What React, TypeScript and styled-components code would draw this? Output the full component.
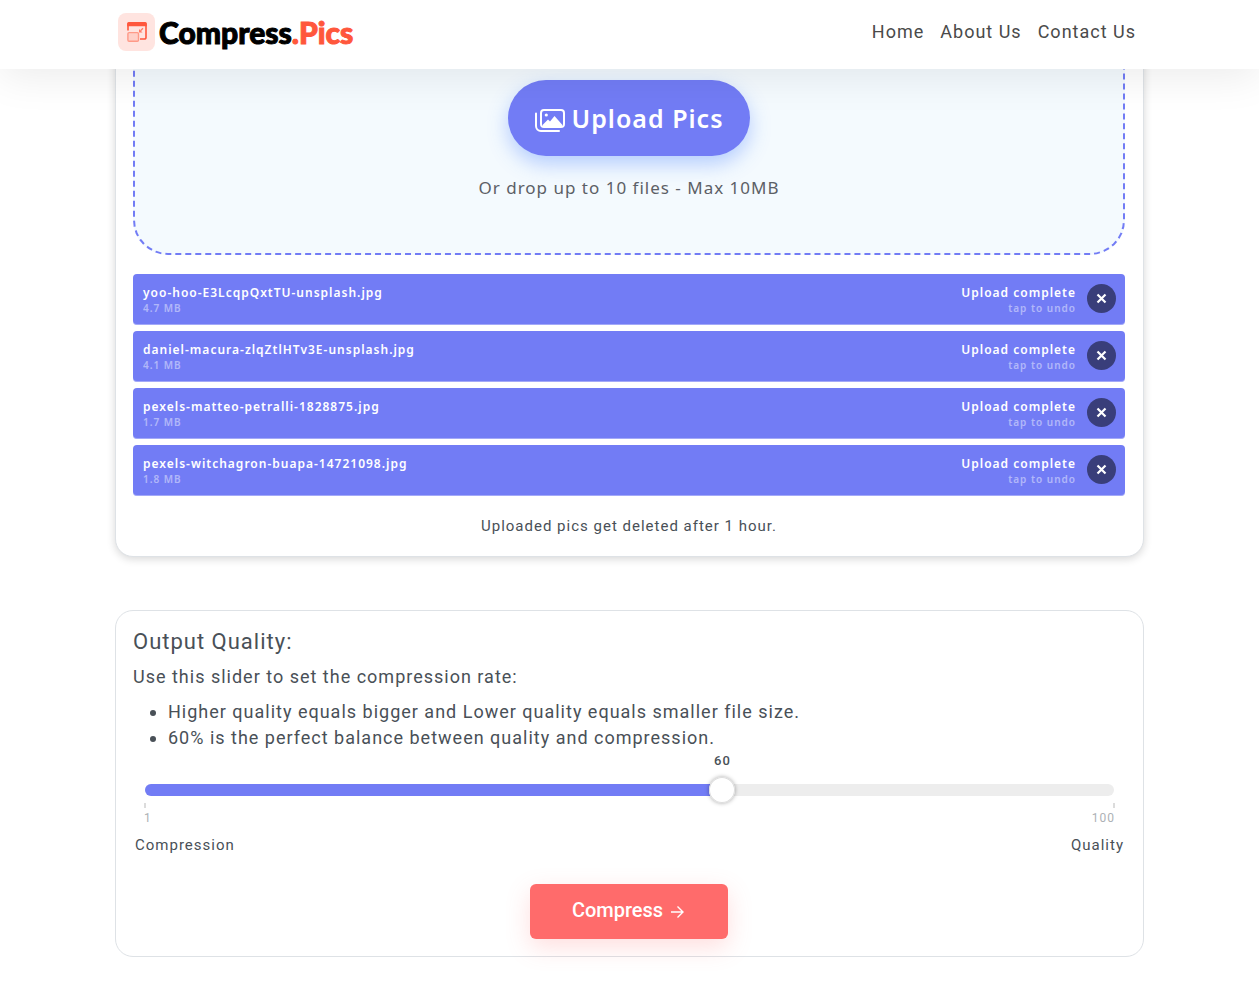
import React, { useState } from "react";
import styled, { createGlobalStyle } from "styled-components";

const GlobalStyle = createGlobalStyle`
  *, *::before, *::after { box-sizing: border-box; }
  body {
    margin: 0;
    background: #fff;
    color: #495057;
    font-family: Roboto, "Liberation Sans", sans-serif;
    font-size: 18px;
    line-height: 26px;
    letter-spacing: 1px;
  }
`;

const Header = styled.header`
  position: sticky;
  top: 0;
  z-index: 2;
  background: #fff;
  box-shadow: 0 8px 40px rgba(0, 0, 0, 0.08);
`;

const Container = styled.div`
  max-width: 1029px;
  margin: 0 auto;
`;

const HeaderInner = styled(Container)`
  display: flex;
  align-items: center;
  justify-content: space-between;
  height: 69px;
  padding: 0 8px 5px 3px;
`;

const Brand = styled.a`
  display: flex;
  align-items: center;
  gap: 4px;
  color: #000;
  text-decoration: none;
  font-family: Lato, sans-serif;
  font-size: 30px;
  font-weight: 900;
  line-height: 38px;
  letter-spacing: 0;
  -webkit-text-stroke: 1px currentColor;
`;

const BrandAccent = styled.span`
  color: #ff573c;
`;

const Nav = styled.nav`
  display: flex;
  gap: 16px;
`;

const NavLink = styled.a`
  color: #4a4a4a;
  text-decoration: none;
`;

const Card = styled.section`
  border: 1px solid #dee2e6;
  border-radius: 18px;
  background: #fff;
  padding: 17px 18px 17px 17px;
`;

const UploadCard = styled(Card)`
  margin-top: -62px;
  box-shadow: 0 2px 8px rgba(0, 0, 0, 0.16);
`;

const DropZone = styled.div`
  display: flex;
  flex-direction: column;
  align-items: center;
  gap: 18px;
  padding: 53px 0 51px;
  border: 2px dashed #727cf5;
  border-radius: 35px;
  background: #f4fafe;
`;

const UploadButton = styled.button`
  display: flex;
  align-items: center;
  gap: 7px;
  height: 76px;
  padding: 0 27px;
  border: 0;
  border-radius: 38px;
  background: #727cf5;
  box-shadow: 0 8px 20px rgba(60, 120, 255, 0.35);
  color: #fff;
  font-family: "Noto Sans", sans-serif;
  font-size: 25px;
  font-weight: 600;
  letter-spacing: 1px;

  svg {
    margin-top: 6px;
  }
`;

const DropHint = styled.p`
  margin: 0;
  color: #5c6066;
  font-family: "Noto Sans", sans-serif;
  font-size: 17px;
  line-height: 28px;
`;

const FileList = styled.ul`
  display: grid;
  gap: 6px;
  margin: 19px 0 17px;
  padding: 0;
  list-style: none;
`;

const FileRow = styled.li`
  display: flex;
  align-items: center;
  gap: 11px;
  height: 51px;
  padding: 0 9px 2px 10px;
  border-radius: 4px;
  background: #727cf5;
  box-shadow: inset 0 -1px 0 rgba(255, 255, 255, 0.35);
  color: #fff;
  font-family: "Noto Sans", sans-serif;
`;

const FileText = styled.div<{ $end?: boolean }>`
  display: flex;
  flex-direction: column;
  flex: ${(p) => (p.$end ? "none" : "1")};
  text-align: ${(p) => (p.$end ? "right" : "left")};
  padding-top: 2px;
`;

const FileMain = styled.span`
  font-size: 12px;
  font-weight: 600;
  line-height: 17px;
`;

const FileSub = styled.span`
  font-size: 10px;
  font-weight: 600;
  line-height: 15px;
  opacity: 0.45;
`;

const RemoveButton = styled.button`
  display: grid;
  place-items: center;
  width: 29px;
  height: 29px;
  padding: 0;
  border: 0;
  border-radius: 50%;
  background: #393e7a;
`;

const Note = styled.p`
  margin: 0;
  font-size: 15px;
  line-height: 26px;
  text-align: center;
`;

const QualityCard = styled(Card)`
  margin: 53px 0 34px;
`;

const Title = styled.h2`
  margin: 0 0 8px;
  font-size: 22px;
  font-weight: 400;
  line-height: 28px;
`;

const Lead = styled.p`
  margin: 0 0 9px;
`;

const Tips = styled.ul`
  margin: 0;
  padding-left: 35px;
`;

const Slider = styled.div`
  margin: 0 11px 0 12px;
`;

const ValueRow = styled.div`
  position: relative;
  height: 20px;
`;

const Value = styled.output`
  position: absolute;
  transform: translateX(-50%);
  font-size: 13px;
  font-weight: 500;
  line-height: 20px;
`;

const TrackArea = styled.div`
  display: grid;
  align-items: center;
  height: 38px;
`;

const Track = styled.div`
  grid-area: 1 / 1;
  height: 12px;
  border-radius: 6px;
  background: #ededed;
  overflow: hidden;
`;

const Fill = styled.div`
  height: 100%;
  background: #727cf5;
`;

const Range = styled.input`
  grid-area: 1 / 1;
  height: 26px;
  margin: 0 -13px;
  appearance: none;
  background: transparent;

  &::-webkit-slider-thumb {
    appearance: none;
    width: 26px;
    height: 26px;
    border: 0;
    border-radius: 50%;
    background: #fff;
    box-shadow: inset 0 0 0 1px #ddd, 0 0 4px rgba(0, 0, 0, 0.35);
  }
`;

const Scale = styled.div`
  display: flex;
  justify-content: space-between;
  margin: -6px -1px 0;
`;

const Mark = styled.span<{ $end?: boolean }>`
  display: flex;
  flex-direction: column;
  align-items: ${(p) => (p.$end ? "flex-end" : "flex-start")};
  color: #adb1b5;
  font-size: 12px;
  line-height: 20px;

  &::before {
    content: "";
    width: 2px;
    height: 5px;
    background: #dcdcdc;
  }
`;

const Ends = styled.div`
  display: flex;
  justify-content: space-between;
  padding: 0 1px 0 2px;
  margin: 4px 0 26px;
  font-size: 15px;
`;

const CompressButton = styled.button`
  display: flex;
  align-items: center;
  justify-content: center;
  gap: 7px;
  width: 198px;
  height: 55px;
  margin: 0 auto;
  padding: 0 2px 3px 0;
  border: 0;
  border-radius: 6px;
  background: #ff6b6b;
  box-shadow: 0 8px 24px rgba(255, 107, 107, 0.22);
  color: #fff;
  font-family: Roboto, sans-serif;
  font-size: 20px;
  font-weight: 500;
  letter-spacing: 0;

  svg {
    margin-top: 2px;
  }
`;

const LogoMark = () => (
  <svg width="37" height="38" viewBox="0 0 37 38" fill="none" aria-hidden="true">
    <rect width="37" height="38" rx="8" fill="#ffe4e0" />
    <path d="M10 17.500V11a1 1 0 0 1 1-1h16a1 1 0 0 1 1 1v13.500a1.500 1.500 0 0 1-1.500 1.500H22" stroke="#ff573c" strokeWidth="1.600" />
    <path d="M9.200 13.200V10.800a1.800 1.800 0 0 1 1.800-1.800h16a1.800 1.800 0 0 1 1.800 1.800v2.400z" fill="#ff573c" />
    <rect x="9.900" y="19.600" width="10.600" height="8.600" rx="1.200" fill="#ffd0c8" stroke="#ff9a88" strokeWidth="1.400" />
    <path d="M25 15.300l-2.500 2.500" stroke="#ff7a64" strokeWidth="1.300" />
    <path d="M21 16v3.500h3.500z" fill="#ff7a64" />
  </svg>
);

const ImagesIcon = () => (
  <svg width="30" height="24" viewBox="0 0 30 24" fill="none" aria-hidden="true">
    <rect x="6" y="1" width="23" height="17" rx="3" stroke="#fff" strokeWidth="2" />
    <path d="M1 4.500v12.500a5 5 0 0 0 5 5h18" stroke="#fff" strokeWidth="2" strokeLinecap="round" />
    <circle cx="11.300" cy="6" r="1.600" fill="#fff" />
    <path d="M8 17v-1.500l5-5 2 2 4.500-5.500 7.500 8.500V17z" fill="#fff" />
  </svg>
);

const CloseIcon = () => (
  <svg width="11" height="11" viewBox="0 0 11 11" aria-hidden="true">
    <path d="M1.500 1.500l8 8M9.500 1.500l-8 8" stroke="#fff" strokeWidth="2.200" />
  </svg>
);

const ArrowIcon = () => (
  <svg width="14" height="14" viewBox="0 0 14 14" fill="none" aria-hidden="true">
    <path d="M1 8h11.500M7.500 2.500l5.500 5.500-5.500 5.500" stroke="#fff" strokeWidth="1.400" />
  </svg>
);

const files = [
  { name: "yoo-hoo-E3LcqpQxtTU-unsplash.jpg", size: "4.7 MB" },
  { name: "daniel-macura-zlqZtlHTv3E-unsplash.jpg", size: "4.1 MB" },
  { name: "pexels-matteo-petralli-1828875.jpg", size: "1.7 MB" },
  { name: "pexels-witchagron-buapa-14721098.jpg", size: "1.8 MB" },
];

export default function App() {
  const [quality, setQuality] = useState(60);
  const percent = ((quality - 1) / 99) * 100;

  return (
    <>
      <GlobalStyle />
      <Header>
        <HeaderInner>
          <Brand href="#">
            <LogoMark />
            <span>Compress<BrandAccent>.Pics</BrandAccent></span>
          </Brand>
          <Nav>
            <NavLink href="#">Home</NavLink>
            <NavLink href="#">About Us</NavLink>
            <NavLink href="#">Contact Us</NavLink>
          </Nav>
        </HeaderInner>
      </Header>
      <Container as="main">
        <UploadCard>
          <DropZone>
            <UploadButton type="button">
              <ImagesIcon />
              Upload Pics
            </UploadButton>
            <DropHint>Or drop up to 10 files - Max 10MB</DropHint>
          </DropZone>
          <FileList>
            {files.map((file) => (
              <FileRow key={file.name}>
                <FileText>
                  <FileMain>{file.name}</FileMain>
                  <FileSub>{file.size}</FileSub>
                </FileText>
                <FileText $end>
                  <FileMain>Upload complete</FileMain>
                  <FileSub>tap to undo</FileSub>
                </FileText>
                <RemoveButton type="button" aria-label={`Remove ${file.name}`}>
                  <CloseIcon />
                </RemoveButton>
              </FileRow>
            ))}
          </FileList>
          <Note>Uploaded pics get deleted after 1 hour.</Note>
        </UploadCard>
        <QualityCard>
          <Title id="quality-title">Output Quality:</Title>
          <Lead>Use this slider to set the compression rate:</Lead>
          <Tips>
            <li>Higher quality equals bigger and Lower quality equals smaller file size.</li>
            <li>60% is the perfect balance between quality and compression.</li>
          </Tips>
          <Slider>
            <ValueRow>
              <Value htmlFor="quality" style={{ left: `${percent}%` }}>{quality}</Value>
            </ValueRow>
            <TrackArea>
              <Track>
                <Fill style={{ width: `${percent}%` }} />
              </Track>
              <Range
                id="quality"
                type="range"
                min={1}
                max={100}
                value={quality}
                aria-labelledby="quality-title"
                onChange={(e) => setQuality(Number(e.target.value))}
              />
            </TrackArea>
            <Scale>
              <Mark>1</Mark>
              <Mark $end>100</Mark>
            </Scale>
          </Slider>
          <Ends>
            <span>Compression</span>
            <span>Quality</span>
          </Ends>
          <CompressButton type="button">
            Compress
            <ArrowIcon />
          </CompressButton>
        </QualityCard>
      </Container>
    </>
  );
}
